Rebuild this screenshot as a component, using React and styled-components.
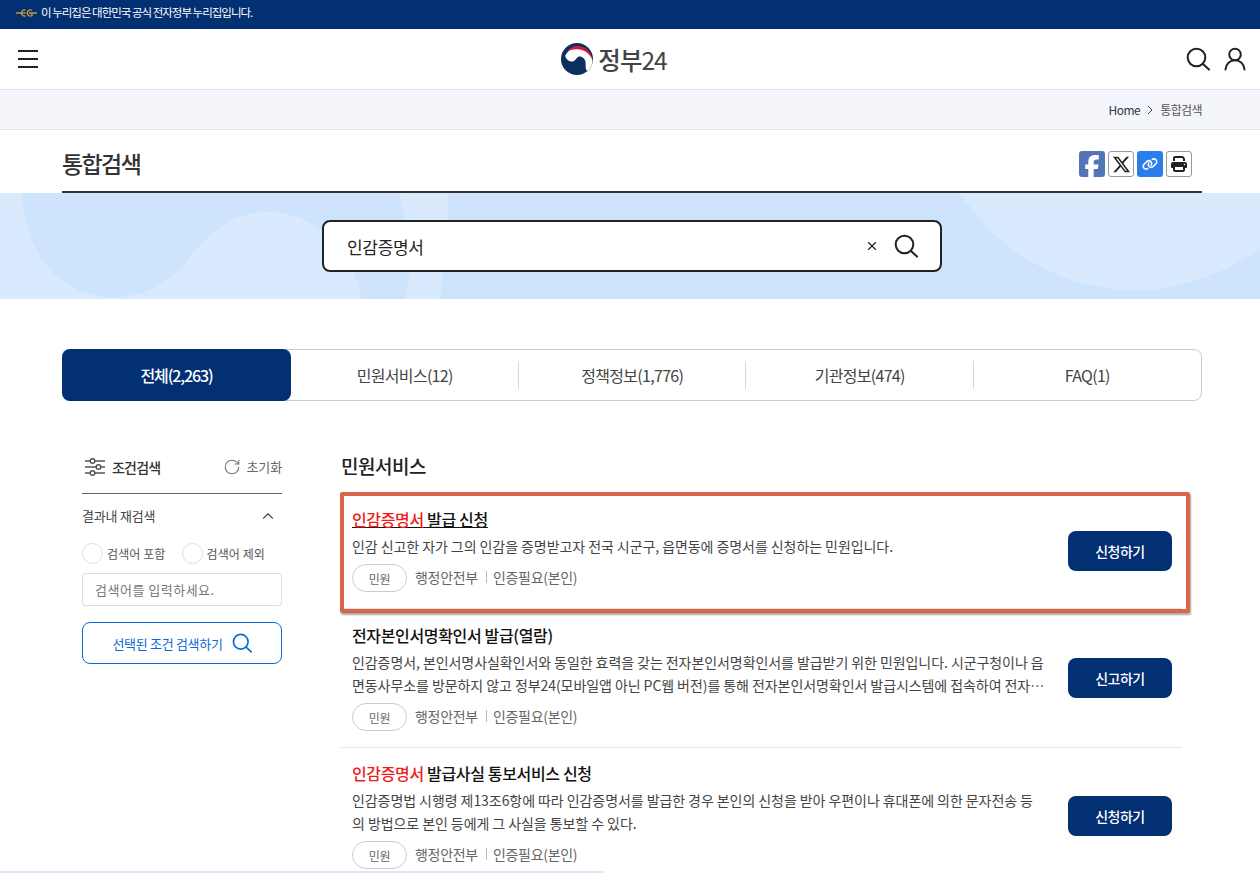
import React from "react";
import styled, { createGlobalStyle } from "styled-components";
import { FaFacebookF, FaXTwitter, FaLink, FaPrint } from "react-icons/fa6";
import { ChevronUp, RotateCw, X } from "lucide-react";

const GlobalStyle = createGlobalStyle`
  html, body {
    margin: 0;
    padding: 0;
    height: 100%;
    overflow: hidden;
    background: #fff;
  }
  * { box-sizing: border-box; }
  body {
    font-family: "Noto Sans CJK KR", "Noto Sans", sans-serif;
    color: #222;
    letter-spacing: -0.5px;
  }
`;

const navy = "#032f73";

const Page = styled.div`
  height: 873px;
  overflow: hidden;
`;

const TopBanner = styled.div`
  height: 29px;
  background: ${navy};
  color: #fff;
  font-size: 11.5px;
  letter-spacing: -1px;
  line-height: 24px;
  padding-left: 16px;
  display: flex;
  align-items: flex-start;
  gap: 4px;
`;

const EgLogo = styled.svg`
  width: 21px;
  height: 10px;
  margin-top: 8px;
`;

const Header = styled.header`
  height: 61px;
  border-bottom: 1px solid #e2e2e8;
  padding: 0 14px 0 18px;
  display: grid;
  grid-template-columns: 1fr auto 1fr;
  align-items: center;
`;

const Burger = styled.div`
  width: 20px;
  height: 18px;
  display: flex;
  flex-direction: column;
  justify-content: space-between;
  span {
    display: block;
    height: 2px;
    background: #222;
  }
`;

const Logo = styled.div`
  display: flex;
  align-items: center;
  gap: 5px;
  font-size: 24.5px;
  font-weight: 500;
  color: #444;
  letter-spacing: -1px;
  margin-right: 36px;
`;

const LogoDigits = styled.span`
  font-weight: 400;
  margin-left: -5px;
`;

const HeaderIcons = styled.div`
  display: flex;
  justify-content: flex-end;
  gap: 14px;
  color: #222;
`;

const Breadcrumb = styled.div`
  height: 40px;
  background: #f4f5fa;
  border-bottom: 1px solid #e6e6e8;
  padding-right: 58px;
  display: flex;
  justify-content: flex-end;
  align-items: center;
  gap: 6px;
  font-size: 12px;
  color: #333;
`;

const Crumb = styled.span`
  color: ${(p) => (p.$current ? "#555" : "#2c3a4d")};
  letter-spacing: ${(p) => (p.$current ? "-0.6px" : "-0.5px")};
`;

const Container = styled.div`
  width: 1140px;
  margin-left: 62px;
`;

const TitleRow = styled(Container)`
  height: 63px;
  border-bottom: 2px solid #333;
  padding: 5px 10px 0 0;
  display: flex;
  justify-content: space-between;
  align-items: center;
`;

const PageTitle = styled.h1`
  margin: 0;
  font-size: 23px;
  font-weight: 500;
  letter-spacing: -1.6px;
  color: #333;
`;

const ShareList = styled.div`
  display: flex;
  gap: 3px;
  margin-top: 2px;
`;

const ShareButton = styled.span`
  width: 26px;
  height: 26px;
  border-radius: 3px;
  display: flex;
  align-items: center;
  justify-content: center;
  background: ${(p) => p.$bg || "#fff"};
  color: ${(p) => (p.$bg ? "#fff" : "#222")};
  border: ${(p) => (p.$bg ? "none" : "1px solid #999")};
  overflow: hidden;
`;

const Hero = styled.section`
  position: relative;
  height: 106px;
  background: #cee4fd;
  padding: 27px 0 0 322px;
`;

const HeroShapes = styled.svg`
  position: absolute;
  inset: 0;
  width: 100%;
  height: 100%;
`;

const SearchBox = styled.div`
  position: relative;
  width: 620px;
  height: 52px;
  background: #fff;
  border: 2px solid #222;
  border-radius: 8px;
  padding: 0 22px 0 23px;
  display: flex;
  align-items: center;
  font-size: 17px;
  letter-spacing: -0.3px;
  color: #222;
`;

const SearchText = styled.span`
  flex: 1;
`;

const ClearIcon = styled(X)`
  margin-right: 15px;
`;

const Tabs = styled(Container)`
  margin-top: 50px;
  height: 52px;
  border: 1px solid #ccc;
  border-radius: 8px;
  display: grid;
  grid-template-columns: 228px repeat(4, 1fr);
`;

const Tab = styled.div`
  position: relative;
  display: flex;
  align-items: center;
  justify-content: center;
  font-size: 16px;
  letter-spacing: -0.7px;
  color: #444;
  margin: -1px 0 -1px ${(p) => (p.$active ? "-1px" : "0")};
  ${(p) =>
    p.$active &&
    `
    background: ${navy};
    color: #fff;
    font-weight: 500;
    letter-spacing: -1.1px;
    border-radius: 8px;
  `}
  ${(p) =>
    p.$divider &&
    `
    &::before {
      content: "";
      position: absolute;
      left: -1px;
      top: 12px;
      bottom: 12px;
      width: 1px;
      background: #d8d8d8;
    }
  `}
`;

const Body = styled(Container)`
  margin-top: 48px;
  display: flex;
  padding-left: 20px;
`;

const Sidebar = styled.aside`
  width: 200px;
  flex: none;
  margin-right: 59px;
`;

const FilterHead = styled.div`
  height: 45px;
  border-bottom: 1px solid #666;
  display: flex;
  align-items: center;
  padding: 0 0 9px 3px;
`;

const FilterTitle = styled.strong`
  flex: 1;
  margin-left: 7px;
  font-size: 14px;
  font-weight: 500;
  letter-spacing: -0.8px;
  color: #333;
`;

const ResetButton = styled.span`
  display: flex;
  align-items: center;
  gap: 5px;
  font-size: 13px;
  letter-spacing: -0.1px;
  color: #666;
`;

const FilterSection = styled.div`
  height: 45px;
  display: flex;
  align-items: center;
  justify-content: space-between;
  font-size: 13px;
  letter-spacing: -0.2px;
  color: #444;
  padding: 0 5px 2px 0;
`;

const RadioRow = styled.div`
  display: flex;
  gap: 16px;
  margin-top: 4px;
`;

const RadioLabel = styled.label`
  display: flex;
  align-items: center;
  gap: 4px;
  font-size: 12px;
  letter-spacing: 0.1px;
  color: #555;
`;

const RadioMark = styled.span`
  width: 21px;
  height: 21px;
  border: 1px solid #ddd;
  border-radius: 50%;
  background: #fff;
`;

const KeywordInput = styled.div`
  margin-top: 9px;
  height: 33px;
  border: 1px solid #ddd;
  border-radius: 3px;
  padding-left: 12px;
  display: flex;
  align-items: center;
  font-size: 13px;
  letter-spacing: 0.5px;
  color: #777;
`;

const ApplyButton = styled.div`
  margin-top: 16px;
  height: 42px;
  border: 1px solid #0b6bd6;
  border-radius: 8px;
  display: flex;
  align-items: center;
  justify-content: center;
  gap: 9px;
  font-size: 13px;
  letter-spacing: -0.3px;
  color: #0b6bd6;
`;

const Results = styled.main`
  width: 841px;
`;

const SectionTitle = styled.h2`
  margin: 0;
  height: 43px;
  font-size: 19px;
  line-height: 33px;
  font-weight: 500;
  letter-spacing: -0.5px;
  color: #222;
`;

const Item = styled.article`
  position: relative;
  display: flex;
  align-items: center;
  padding: ${(p) => (p.$first ? "15px" : "14px")} 10px 16px 11px;
  border-bottom: 1px solid #e5e5e5;
  &:last-child {
    padding-top: 13px;
  }
  ${(p) =>
    p.$highlight &&
    `
    &::after {
      content: "";
      position: absolute;
      left: -1px;
      right: -8px;
      top: 0;
      bottom: -5px;
      border: 4px solid #d9664a;
      border-radius: 2px;
      box-shadow: 1px 2px 2px rgba(0, 0, 0, 0.35);
    }
  `}
`;

const ItemText = styled.div`
  width: 694px;
  margin-right: 22px;
  flex: none;
`;

const ItemTitle = styled.h3`
  margin: 0;
  font-size: 16px;
  line-height: 24px;
  font-weight: 500;
  letter-spacing: -0.35px;
  color: #111;
  ${(p) => p.$underline && "text-decoration: underline;"}
  em {
    font-style: normal;
    color: #ee1c1c;
  }
`;

const ItemDesc = styled.p`
  margin: 4px 0 6px;
  font-size: 14px;
  line-height: 23px;
  letter-spacing: -0.07px;
  color: #444;
  white-space: pre-line;
`;

const Meta = styled.div`
  display: flex;
  align-items: center;
  padding-bottom: 2px;
  font-size: 14px;
  letter-spacing: -0.3px;
  color: #666;
`;

const Chip = styled.span`
  width: 55px;
  height: 28px;
  border: 1px solid #ccc;
  border-radius: 14px;
  display: flex;
  align-items: center;
  justify-content: center;
  font-size: 12px;
  color: #666;
  margin: 0 8px -2px 0;
`;

const MetaSplit = styled.span`
  width: 1px;
  height: 12px;
  background: #bbb;
  margin: 0 6px 0 8px;
`;

const ActionButton = styled.div`
  width: 104px;
  height: 40px;
  flex: none;
  margin-top: 2px;
  background: ${navy};
  color: #fff;
  border-radius: 8px;
  display: flex;
  align-items: center;
  justify-content: center;
  font-size: 14px;
  font-weight: 500;
`;

const ScrollThumb = styled.div`
  position: fixed;
  left: 0;
  bottom: 0;
  width: 604px;
  height: 2px;
  background: #e0e6f5;
  border-radius: 0 2px 2px 0;
`;

const SearchIcon = ({ size = 24, color = "#222", width = 2 }) => (
  <svg width={size} height={size} viewBox="0 0 24 24" fill="none" stroke={color} strokeWidth={width}>
    <circle cx="10.5" cy="10.5" r="8.8" />
    <path d="M17 17l6 5.6" strokeLinecap="round" />
  </svg>
);

const UserIcon = () => (
  <svg width="22" height="24" viewBox="0 0 22 24" fill="none" stroke="#222" strokeWidth="2">
    <circle cx="11" cy="7.5" r="5.8" />
    <path d="M1.5 22.5c.4-5.6 4.4-9.2 9.5-9.2s9.1 3.6 9.5 9.2" strokeLinecap="round" />
  </svg>
);

const FilterIcon = () => (
  <svg width="20" height="20" viewBox="0 0 20 20" fill="none" stroke="#555" strokeWidth="1.5">
    <path d="M0 4h5M10 4h10M0 10h11M16 10h4M0 16h5M10 16h10" />
    <circle cx="7.5" cy="4" r="2.3" />
    <circle cx="13.5" cy="10" r="2.3" />
    <circle cx="7.5" cy="16" r="2.3" />
  </svg>
);

const items = [
  {
    mark: "인감증명서",
    title: " 발급 신청",
    desc: "인감 신고한 자가 그의 인감을 증명받고자 전국 시군구, 읍면동에 증명서를 신청하는 민원입니다.",
    action: "신청하기",
    highlight: true,
  },
  {
    title: "전자본인서명확인서 발급(열람)",
    desc: "인감증명서, 본인서명사실확인서와 동일한 효력을 갖는 전자본인서명확인서를 발급받기 위한 민원입니다. 시군구청이나 읍\n면동사무소를 방문하지 않고 정부24(모바일앱 아닌 PC웹 버전)를 통해 전자본인서명확인서 발급시스템에 접속하여 전자…",
    action: "신고하기",
  },
  {
    mark: "인감증명서",
    title: " 발급사실 통보서비스 신청",
    desc: "인감증명법 시행령 제13조6항에 따라 인감증명서를 발급한 경우 본인의 신청을 받아 우편이나 휴대폰에 의한 문자전송 등\n의 방법으로 본인 등에게 그 사실을 통보할 수 있다.",
    action: "신청하기",
  },
];

const tabs = ["전체(2,263)", "민원서비스(12)", "정책정보(1,776)", "기관정보(474)", "FAQ(1)"];

export default function App() {
  return (
    <Page>
      <GlobalStyle />
      <TopBanner>
        <EgLogo viewBox="0 0 21 10" fill="none" stroke="#c8963e" strokeWidth="1.4">
          <path d="M0 5h5M16 5h5M9.5 2.2a3 3 0 1 0 0 5.6M5.5 5h4M16 2.5a3 3 0 1 0 0 5V5h-3" />
        </EgLogo>
        이 누리집은 대한민국 공식 전자정부 누리집입니다.
      </TopBanner>

      <Header>
        <Burger>
          <span />
          <span />
          <span />
        </Burger>
        <Logo>
          <svg width="32" height="32" viewBox="0 0 32 32">
            <circle cx="16" cy="16" r="16" fill="#0b2f5e" />
            <path d="M4 13C7 7 12 5 17 5C25 5 31 11 31.5 18C31.5 22 29 26 26 28C24 25.5 25 22 24.5 19C24 15.5 20 12.5 17 14C15 15 15 17 13 18C10 19.5 6 18 4 13Z" fill="#fff" />
            <path d="M6 8.5C9 4.5 13 2.5 18 3C25 3.5 31 10 31.5 17C29 11 24 7 18 6.5C13 6 9 7 6 8.5Z" fill="#d4183d" />
          </svg>
          정부
          <LogoDigits>24</LogoDigits>
        </Logo>
        <HeaderIcons>
          <SearchIcon />
          <UserIcon />
        </HeaderIcons>
      </Header>

      <Breadcrumb>
        <Crumb>Home</Crumb>
        <svg width="8" height="10" viewBox="0 0 8 10" fill="none" stroke="#444">
          <path d="M2 1l4 4-4 4" />
        </svg>
        <Crumb $current>통합검색</Crumb>
      </Breadcrumb>

      <TitleRow>
        <PageTitle>통합검색</PageTitle>
        <ShareList>
          <ShareButton $bg="#5374b6">
            <FaFacebookF size={24} style={{ marginTop: 6 }} />
          </ShareButton>
          <ShareButton>
            <FaXTwitter size={19} />
          </ShareButton>
          <ShareButton $bg="#2b7de9">
            <FaLink size={16} />
          </ShareButton>
          <ShareButton>
            <FaPrint size={16} />
          </ShareButton>
        </ShareList>
      </TitleRow>

      <Hero>
        <HeroShapes viewBox="0 0 1260 106" preserveAspectRatio="none">
          <path
            d="M0 0H22C24 60 60 104 113 104C150 104 175 85 192 62C215 32 240 19 268 19C310 19 350 50 362 106H0Z"
            fill="#d9e9fe"
          />
          <path d="M398 0H449C446 40 444 70 440 106H406C412 70 410 30 398 0Z" fill="#d9e9fe" />
          <path d="M960 0C1000 60 1060 95 1133 97C1180 98 1230 78 1260 55V0Z" fill="#d9e9fe" />
        </HeroShapes>
        <SearchBox>
          <SearchText>인감증명서</SearchText>
          <ClearIcon size={14} strokeWidth={2} color="#222" />
          <SearchIcon />
        </SearchBox>
      </Hero>

      <Tabs>
        {tabs.map((tab, i) => (
          <Tab key={tab} $active={i === 0} $divider={i > 1}>
            {tab}
          </Tab>
        ))}
      </Tabs>

      <Body>
        <Sidebar>
          <FilterHead>
            <FilterIcon />
            <FilterTitle>조건검색</FilterTitle>
            <ResetButton>
              <RotateCw size={18} strokeWidth={1.5} color="#777" />
              초기화
            </ResetButton>
          </FilterHead>
          <FilterSection>
            결과내 재검색
            <ChevronUp size={18} strokeWidth={1.5} color="#444" />
          </FilterSection>
          <RadioRow>
            <RadioLabel>
              <RadioMark />
              검색어 포함
            </RadioLabel>
            <RadioLabel>
              <RadioMark />
              검색어 제외
            </RadioLabel>
          </RadioRow>
          <KeywordInput>검색어를 입력하세요.</KeywordInput>
          <ApplyButton>
            선택된 조건 검색하기
            <SearchIcon size={20} color="#0b6bd6" />
          </ApplyButton>
        </Sidebar>

        <Results>
          <SectionTitle>민원서비스</SectionTitle>
          {items.map((item, i) => (
            <Item key={item.title} $first={i === 0} $highlight={item.highlight}>
              <ItemText>
                <ItemTitle $underline={item.highlight}>
                  {item.mark && <em>{item.mark}</em>}
                  {item.title}
                </ItemTitle>
                <ItemDesc>{item.desc}</ItemDesc>
                <Meta>
                  <Chip>민원</Chip>
                  행정안전부
                  <MetaSplit />
                  인증필요(본인)
                </Meta>
              </ItemText>
              <ActionButton>{item.action}</ActionButton>
            </Item>
          ))}
        </Results>
      </Body>
      <ScrollThumb />
    </Page>
  );
}
